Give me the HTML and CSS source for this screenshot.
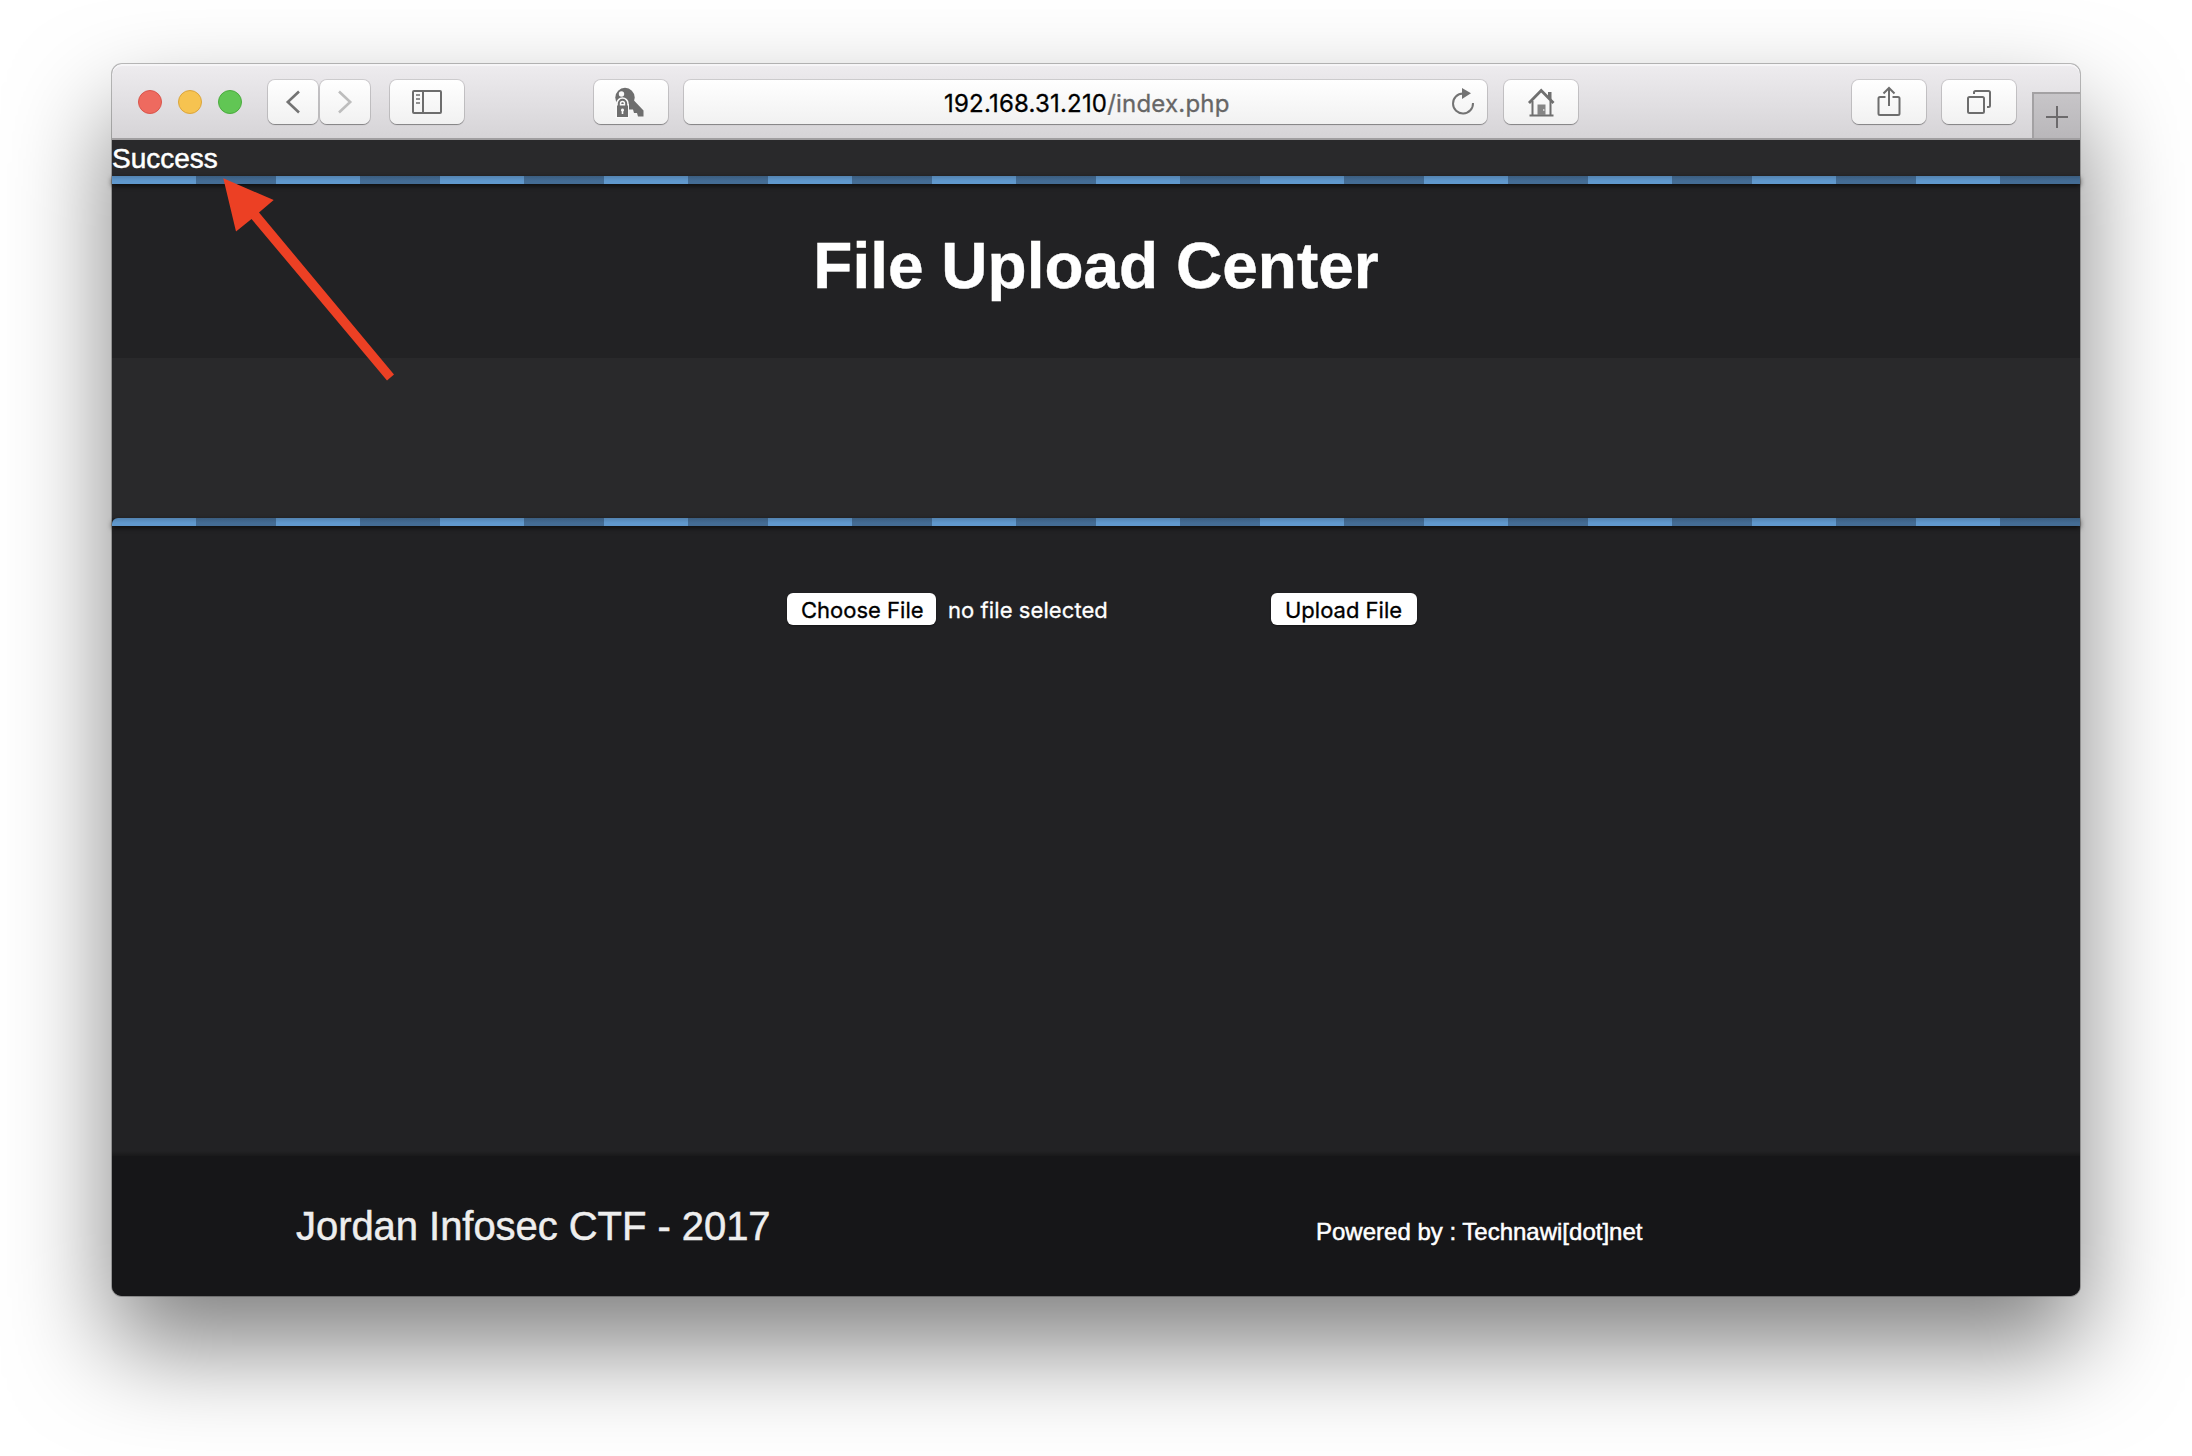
FILE: index.html
```html
<!DOCTYPE html>
<html lang="en">
<head>
<meta charset="utf-8">
<title>File Upload Center</title>
<link rel="stylesheet" href="styles.css">
</head>
<body>
<div class="window">
  <div class="toolbar">
    <div class="lights"><i class="light red"></i><i class="light yellow"></i><i class="light green"></i></div>
    <div class="nav">
      <span class="btn small"><svg width="50" height="44" viewBox="0 0 50 44" fill="none" stroke="#737373" stroke-width="2.6"><path d="M31 11.500L19.800 22L31 32.500"/></svg></span>
      <span class="btn small"><svg width="50" height="44" viewBox="0 0 50 44" fill="none" stroke="#bdbdbd" stroke-width="2.600"><path d="M19 11.500L30.200 22L19 32.500"/></svg></span>
    </div>
    <span class="btn sidebar"><svg width="74" height="44" viewBox="0 0 74 44" fill="none" stroke="#6d6d6d" stroke-width="2"><rect x="23" y="11" width="28" height="22" rx="1"/><path d="M33 11v22"/><path stroke="#919191" d="M26 15h4M26 19h4M26 23h4"/></svg></span>
    <span class="btn keys"><svg width="74" height="44" viewBox="0 0 74 44"><circle cx="31" cy="17.500" r="9.700" fill="#6e6e6e"/><path fill="#6e6e6e" d="M33 26L40 20.500L49.500 30.500V36.500H44L43 33H40L39 29.500H35z"/><circle cx="27.500" cy="14" r="2.700" fill="#fafafa"/><path fill="none" stroke="#fafafa" stroke-width="5" d="M24.800 25v-1.500a3.700 3.700 0 0 1 7.400 0V25"/><path fill="#fafafa" d="M21.500 24h13.500v14H21.500z"/><path fill="none" stroke="#6e6e6e" stroke-width="2" d="M24.800 26v-2.500a3.700 3.700 0 0 1 7.400 0V26"/><path fill="#6e6e6e" d="M23 25.500h11v11.500H23z"/><path fill="#fafafa" d="M28.500 28.500a1.700 1.700 0 0 1 .8 3.100V34h-1.600v-2.400a1.700 1.700 0 0 1 .8-3.100z"/></svg></span>
    <div class="btn url"><span class="address">192.168.31.210<span class="path">/index.php</span></span>
      <svg class="reload" width="24" height="30" viewBox="0 0 24 30"><path fill="none" stroke="#737373" stroke-width="2" d="M12 6.500a10 10 0 1 0 10 9.500"/><path fill="#737373" d="M11 1l9 5.300l-9 5.700z"/></svg>
    </div>
    <span class="btn home"><svg width="74" height="44" viewBox="0 0 74 44" fill="none" stroke="#6f6f6f" stroke-width="2"><path stroke-width="2.800" d="M25 23L37.200 10.500L49.500 23"/><path d="M28.500 21v14M46.500 21v14M25.500 35.500h24"/><path fill="#6f6f6f" stroke="none" d="M44 12h3.500v8L44 16.500z"/><path fill="#858585" stroke="none" d="M33.500 24.500h8V35h-8z"/><circle cx="39.800" cy="30" r=".8" fill="#fff" stroke="none"/></svg></span>
    <span class="btn share"><svg width="74" height="44" viewBox="0 0 74 44" fill="none" stroke="#6d6d6d" stroke-width="2"><path d="M33.500 17H28q-1.500 0-1.500 1.500v15q0 1.500 1.500 1.500h18q1.500 0 1.500-1.500v-15q0-1.500-1.500-1.500h-5.500M37 26V8M31.500 13.500L37 8l5.500 5.500"/></svg></span>
    <span class="btn tabs"><svg width="74" height="44" viewBox="0 0 74 44" fill="none" stroke="#6d6d6d" stroke-width="2"><rect x="26" y="17" width="16" height="16" rx="1.500"/><path d="M32 14v-1.500q0-1.500 1.500-1.500h13q1.500 0 1.500 1.500v13q0 1.500-1.500 1.500H45"/></svg></span>
    <span class="newtab"><svg width="46" height="44" viewBox="0 0 46 44" stroke="#6c6a6c" stroke-width="2"><path d="M12 23h22M23 12v22"/></svg></span>
  </div>
  <div class="status">Success</div>
  <div class="stripe"></div>
  <header class="masthead"><h1>File Upload Center</h1></header>
  <div class="banner"></div>
  <div class="stripe rounded"></div>
  <main class="content">
    <div class="form">
      <span class="control choose">Choose File</span>
      <span class="filename">no file selected</span>
      <span class="control upload">Upload File</span>
    </div>
  </main>
  <footer class="footer"><span class="event">Jordan Infosec CTF - 2017</span><span class="powered">Powered by : Technawi[dot]net</span></footer>
  <svg class="arrow" width="180" height="210" viewBox="0 0 180 210"><path fill="#ec4024" d="M3.300 2.300L53.700 24L39 36.500L174 198.500L167 204.500L31.500 43L16 55.500z"/></svg>
</div>
</body>
</html>
```
FILE: styles.css
```css
* { box-sizing: border-box; }
body {
  margin: 0;
  padding: 64px 112px 0;
  height: 1456px;
  overflow: hidden;
  background: #fff;
  font-family: "Liberation Sans", Arial, sans-serif;
  color: #fff;
}
.window {
  position: relative;
  width: 1968px;
  height: 1232px;
  display: flex;
  flex-direction: column;
  border-radius: 10px;
  background: #222224;
  box-shadow: 0 0 0 1px rgba(0,0,0,.25), 0 50px 100px rgba(0,0,0,.5);
}
.toolbar {
  height: 76px;
  flex: none;
  display: flex;
  align-items: flex-start;
  padding: 16px 0 0 26px;
  border-bottom: 2px solid #a09ea0;
  border-radius: 10px 10px 0 0;
  background: linear-gradient(#eeecef, #d6d4d7);
  box-shadow: inset 0 2px 0 #f6f5f7;
}
.lights { display: flex; gap: 16px; margin: 10px 26px 0 0; }
.light { width: 24px; height: 24px; border-radius: 50%; border: 1px solid; }
.red { background: #ee6a5f; border-color: #d9554c; }
.yellow { background: #f6c350; border-color: #dba53c; }
.green { background: #61c654; border-color: #4bac3e; }
.nav { display: flex; gap: 2px; }
.btn {
  width: 74px;
  height: 44px;
  flex: none;
  display: block;
  border-radius: 7px;
  background: linear-gradient(#fff, #f1f1f1);
  box-shadow: 0 0 0 1px rgba(0,0,0,.12), 0 1px 1px rgba(0,0,0,.32);
}
.btn svg { display: block; }
.small { width: 50px; }
.sidebar { margin-left: 20px; }
.keys { margin-left: 130px; }
.url {
  width: 803px;
  margin-left: 16px;
  display: flex;
  align-items: center;
  justify-content: flex-end;
  padding-right: 12px;
  color: #000;
  font: 24px/44px Inter, sans-serif;
}
.address {
  width: 286px;
  margin-right: 221px;
  padding-top: 3px;
  letter-spacing: .2px;
  white-space: nowrap;
  -webkit-text-stroke: .3px;
}
.path { color: #666; }
.home { margin-left: 17px; }
.share { margin-left: 274px; }
.tabs { margin-left: 16px; }
.newtab {
  width: 48px;
  height: 46px;
  margin: 12px 0 0 auto;
  border: solid #a3a1a3;
  border-width: 2px 0 0 2px;
  background: linear-gradient(#c7c5c8, #b9b7ba);
}
.newtab svg { display: block; }
.status {
  height: 36px;
  flex: none;
  padding-top: 1px;
  background: #29292b;
  font-size: 28px;
  line-height: 36px;
  -webkit-text-stroke: .5px;
}
.stripe {
  position: relative;
  height: 8px;
  flex: none;
  background: linear-gradient(rgba(0,0,0,.14), transparent 5px), repeating-linear-gradient(90deg, #6098cd 0 84px, #446c94 84px 164px);
  box-shadow: 0 2px 5px rgba(0,0,0,.65);
}
.rounded { border-top-left-radius: 6px; }
.masthead { height: 174px; flex: none; padding-top: 44px; background: #222224; }
h1 { margin: 0; font-size: 64px; line-height: 76px; text-align: center; -webkit-text-stroke: .4px; }
.banner { height: 160px; flex: none; background: #29292b; }
.content {
  flex: 1;
  padding: 67px 0 0 675px;
  background: linear-gradient(transparent calc(100% - 5px), #19191a), #222224;
}
.form {
  display: flex;
  align-items: center;
  font: 22px/34px Inter, sans-serif;
  white-space: nowrap;
  -webkit-text-stroke: .3px;
}
.control {
  height: 32px;
  flex: none;
  padding-left: 14px;
  border-radius: 6px;
  background: #fff;
  color: #000;
  box-shadow: 0 1px 2px rgba(0,0,0,.4);
}
.choose { width: 149px; letter-spacing: 0; }
.filename { width: 335px; height: 32px; flex: none; padding-left: 12px; letter-spacing: .08px; }
.upload { width: 146px; letter-spacing: 0; }
.footer {
  height: 140px;
  flex: none;
  display: flex;
  align-items: baseline;
  padding: 47px 0 0 184px;
  border-radius: 0 0 10px 10px;
  background: #161618;
}
.event { width: 1018px; font-size: 40px; line-height: 46px; letter-spacing: -.05px; color: #eee; -webkit-text-stroke: .5px; }
.powered { padding-left: 2px; font-size: 24px; -webkit-text-stroke: .5px; }
.arrow { position: absolute; left: 108px; top: 112px; }
```
